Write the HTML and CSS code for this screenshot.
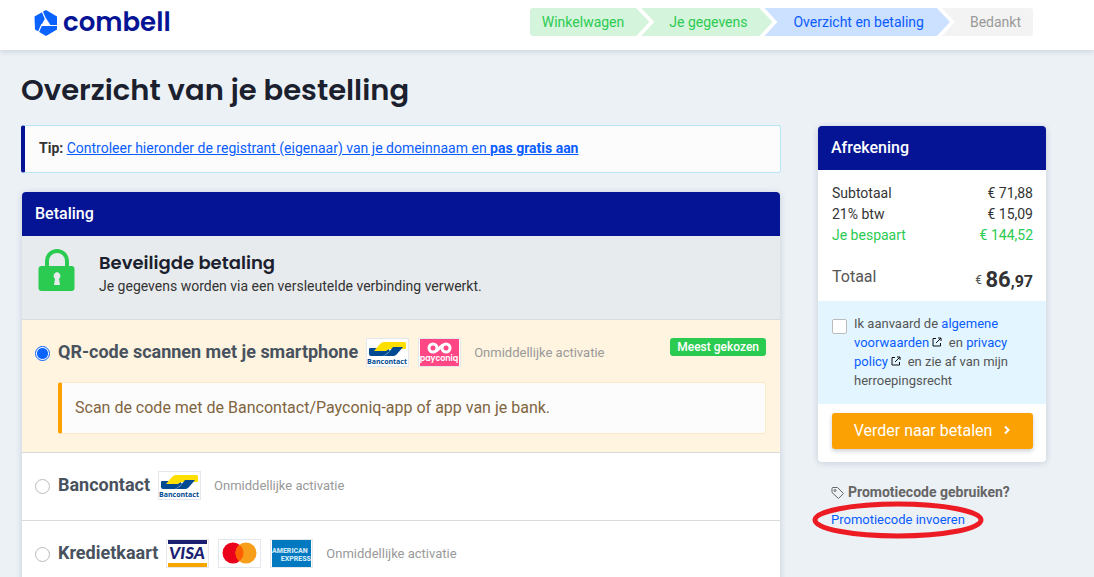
FILE: index.html
```html
<!DOCTYPE html>
<html lang="nl">

<head>
    <meta charset="UTF-8">
    <meta name="viewport" content="width=device-width, initial-scale=1.0">
    <title>Combell - Overzicht en betaling</title>
    <link rel="stylesheet" href="styles.css">
</head>

<body>

    <header>
        <a href="#" class="logo">
            <svg width="24" height="26" viewBox="0 0 24 26" aria-hidden="true">
                <path d="M12 0L23 6.500V19.500L12 26L1 19.500L0.500 6.500z" fill="#0a63ff" />
                <path d="M11.500 7.500L7 16h10z" fill="#fff" />
                <path d="M8 1l3.500 8M16 15.500h8M8 14L4 23" stroke="#fff" stroke-width="1.200" />
            </svg>
            <span>combell</span>
        </a>
        <ol class="steps">
            <li class="step done first">Winkelwagen</li>
            <li class="step done">Je gegevens</li>
            <li class="step current">Overzicht en betaling</li>
            <li class="step last">Bedankt</li>
        </ol>
    </header>

    <main>
        <h1>Overzicht van je bestelling</h1>

        <div class="columns">
            <div class="content">
                <div class="tip">
                    <b>Tip:</b> <a href="#">Controleer hieronder de registrant (eigenaar) van je domeinnaam en <b>pas gratis aan</b></a>
                </div>

                <form class="card payment">
                    <h2 class="card-title">Betaling</h2>

                    <div class="secure">
                        <svg width="38" height="44" viewBox="0 0 38 44" aria-hidden="true">
                            <path d="M9 20V13a10 10 0 0 1 20 0v7" fill="none" stroke="#2bcb51" stroke-width="4" />
                            <rect x="0.500" y="18" width="36" height="25" rx="3" fill="#2bcb51" />
                            <path d="M19 24a4 4 0 0 1 2 7l1 6h-6l1-6a4 4 0 0 1 2-7z" fill="#e8ebee" />
                        </svg>
                        <div>
                            <h3>Beveiligde betaling</h3>
                            <p>Je gegevens worden via een versleutelde verbinding verwerkt.</p>
                        </div>
                    </div>

                    <div class="method selected">
                        <div class="method-line">
                            <input type="radio" name="method" id="qr" checked>
                            <label for="qr">QR-code scannen met je smartphone</label>
                            <svg class="brand" viewBox="0 0 41 27">
                                <path d="M2 10q0-1 1-1h10l7-1 3 4-5 4q-1 1-3 1H4q-2 0-2-2z" fill="#004a91" />
                                <path d="M7 12l6-7c1-1 2-2 4-2h20c2 0 2 1 2 2v4c0 1-1 1-2 1H22l-3 2z" fill="#ffdf00" />
                                <path d="M14 17c4 0 6-2 8-4l4-5h10l-6 7c-2 2-3 2-5 2z" fill="#004a91" />
                                <text x="20" y="25" text-anchor="middle" class="bancontact-name">Bancontact</text>
                            </svg>
                            <svg class="brand" viewBox="0 0 41 27">
                                <rect x="1" width="39" height="27" fill="#ff4785" />
                                <g fill="none" stroke="#fff" stroke-width="3">
                                    <circle cx="14" cy="9" r="4" />
                                    <circle cx="27" cy="9" r="4" />
                                    <path d="M17 12l7-6" />
                                </g>
                                <text x="20" y="22" text-anchor="middle" class="payconiq-name">payconiq</text>
                            </svg>
                            <span class="activation">Onmiddellijke activatie</span>
                            <span class="badge">Meest gekozen</span>
                        </div>
                        <p class="note">Scan de code met de Bancontact/Payconiq-app of app van je bank.</p>
                    </div>

                    <div class="method">
                        <div class="method-line">
                            <input type="radio" name="method" id="bc">
                            <label for="bc">Bancontact</label>
                            <svg class="brand" viewBox="0 0 41 27">
                                <path d="M2 10q0-1 1-1h10l7-1 3 4-5 4q-1 1-3 1H4q-2 0-2-2z" fill="#004a91" />
                                <path d="M7 12l6-7c1-1 2-2 4-2h20c2 0 2 1 2 2v4c0 1-1 1-2 1H22l-3 2z" fill="#ffdf00" />
                                <path d="M14 17c4 0 6-2 8-4l4-5h10l-6 7c-2 2-3 2-5 2z" fill="#004a91" />
                                <text x="20" y="25" text-anchor="middle" class="bancontact-name">Bancontact</text>
                            </svg>
                            <span class="activation">Onmiddellijke activatie</span>
                        </div>
                    </div>

                    <div class="method">
                        <div class="method-line">
                            <input type="radio" name="method" id="card">
                            <label for="card">Kredietkaart</label>
                            <svg class="brand" viewBox="0 0 41 27">
                                <rect x="1" width="39" height="4" fill="#1a1f71" />
                                <rect x="1" y="23" width="39" height="4" fill="#f7a600" />
                                <text x="20" y="19" text-anchor="middle" class="visa-name">VISA</text>
                            </svg>
                            <svg class="brand" viewBox="0 0 41 27">
                                <circle cx="14" cy="13" r="10.500" fill="#eb001b" />
                                <circle cx="27" cy="13" r="10.500" fill="#f79e1b" />
                                <path d="M20.500 4.800a10.500 10.500 0 0 1 0 16.400a10.500 10.500 0 0 1 0-16.400z" fill="#ff5f00" />
                            </svg>
                            <svg class="brand" viewBox="0 0 41 27">
                                <rect x="1" width="39" height="27" fill="#0079c1" />
                                <text x="1" y="13" class="amex-name">AMERICAN</text>
                                <text x="40" y="21" text-anchor="end" class="amex-name">EXPRESS</text>
                            </svg>
                            <span class="activation">Onmiddellijke activatie</span>
                        </div>
                    </div>
                </form>
            </div>

            <aside>
                <div class="card checkout">
                    <h2 class="card-title">Afrekening</h2>
                    <dl class="totals">
                        <div><dt>Subtotaal</dt><dd>€ 71,88</dd></div>
                        <div><dt>21% btw</dt><dd>€ 15,09</dd></div>
                        <div class="saved"><dt>Je bespaart</dt><dd>€ 144,52</dd></div>
                        <div class="total"><dt>Totaal</dt><dd><small>€</small> <b>86</b><b class="cents">,97</b></dd></div>
                    </dl>
                    <div class="terms">
                        <input type="checkbox" id="terms">
                        <label for="terms">Ik aanvaard de <a href="#">algemene voorwaarden</a>
                            <svg class="ext" viewBox="0 0 10 10"><path d="M4 1.500H1v7.500h7.500V6M6 1h3v3M9 1L4 6" /></svg>&nbsp;
                            en <a href="#">privacy policy</a>
                            <svg class="ext" viewBox="0 0 10 10"><path d="M4 1.500H1v7.500h7.500V6M6 1h3v3M9 1L4 6" /></svg>&nbsp;
                            en zie af van mijn herroepingsrecht</label>
                    </div>
                    <button type="button" class="pay">
                        Verder naar betalen
                        <svg width="8" height="10" viewBox="0 0 8 10" aria-hidden="true"><path d="M2 1.500L5.500 5L2 8.500" fill="none" stroke="#fff" stroke-width="2" /></svg>
                    </button>
                </div>

                <div class="promo">
                    <h4>
                        <svg width="14" height="14" viewBox="0 0 14 14" fill="none" stroke="#666" aria-hidden="true">
                            <path d="M1 2.500Q1 1.500 2 1.500L6.500 1.500L12.500 7.500L7.500 12.500L1 6.500z" />
                            <circle cx="4" cy="4.500" r="1" />
                        </svg>
                        Promotiecode gebruiken?
                    </h4>
                    <a href="#" class="promo-link">
                        Promotiecode invoeren
                        <svg class="mark" viewBox="0 0 172 38" aria-hidden="true"><ellipse cx="86" cy="19" rx="83" ry="16" /></svg>
                    </a>
                </div>
            </aside>
        </div>
    </main>

</body>

</html>
```
FILE: styles.css
```css
* {
    box-sizing: border-box;
}

body {
    margin: 0;
    background-color: #ecf1f6;
    color: #333;
    font-family: Roboto, "Liberation Sans", sans-serif;
    font-size: 14px;
    line-height: 21px;
}

h1, h2, h3, h4, p, ol, dl, dd {
    margin: 0;
    padding: 0;
}

a {
    color: #0a5cff;
    text-decoration: none;
}

header {
    display: flex;
    justify-content: space-between;
    align-items: flex-start;
    height: 50px;
    padding: 8px 61px 0 34px;
    background-color: white;
    box-shadow: 0 1px 6px rgba(40, 60, 90, 0.2);
}

.logo {
    display: flex;
    align-items: center;
    gap: 5px;
    height: 30px;
    color: #041494;
    font-family: Poppins, Inter, sans-serif;
    font-size: 26px;
    font-weight: 600;
    line-height: 26px;
}

.logo span {
    padding-bottom: 2px;
}

.steps {
    display: flex;
    list-style: none;
}

.step {
    height: 28px;
    padding: 0 25px 0 28px;
    line-height: 28px;
    font-size: 14px;
    white-space: nowrap;
    background-color: #f3f3f3;
    color: #999;
    clip-path: polygon(0 0, calc(100% - 13px) 0, 100% 50%, calc(100% - 13px) 100%, 0 100%, 13px 50%);
}

.step + .step {
    margin-left: -8px;
}

.step.first {
    padding-left: 12px;
    border-radius: 3px 0 0 3px;
    clip-path: polygon(0 0, calc(100% - 13px) 0, 100% 50%, calc(100% - 13px) 100%, 0 100%);
}

.step.last {
    padding-right: 12px;
    border-radius: 0 3px 3px 0;
    clip-path: polygon(0 0, 100% 0, 100% 100%, 0 100%, 13px 50%);
}

.step.done {
    background-color: #d4f4dc;
    color: #2bcb51;
}

.step.current {
    padding: 0 26px 0 29px;
    background-color: #cce0ff;
    color: #0a5cff;
}

main {
    padding: 20px 48px 0 21px;
}

h1 {
    margin-bottom: 15px;
    color: #1b1f2e;
    font-family: Poppins, Inter, sans-serif;
    font-size: 29px;
    font-weight: 600;
    line-height: 40px;
}

.columns {
    display: flex;
    gap: 37px;
}

.content {
    flex: 1;
}

.tip {
    padding: 11px 14px 13px;
    margin-bottom: 19px;
    background-color: #fcfcfc;
    border: 1px solid #b8e6f2;
    border-left: 4px solid #041494;
    border-radius: 3px;
    line-height: 22px;
}

.tip a {
    text-decoration: underline;
}

.card {
    background-color: white;
    border-radius: 4px;
    box-shadow: 0 1px 6px rgba(40, 60, 90, 0.2);
}

.card-title {
    padding: 11px 13px;
    background-color: #041494;
    border-radius: 4px 4px 0 0;
    color: white;
    font-size: 16px;
    font-weight: 500;
    line-height: 22px;
}

.payment {
    margin: 0 1px;
}

.secure {
    display: flex;
    gap: 23px;
    padding: 12px 16px 0;
    height: 83px;
    background-color: #e8ebee;
}

.secure h3 {
    padding-top: 2px;
    color: #1b1f2e;
    font-family: Poppins, Inter, sans-serif;
    font-size: 18px;
    font-weight: 600;
    line-height: 26px;
}

.method {
    padding: 18px 14px 20px 13px;
    border-top: 1px solid #d9dcdf;
}

.method.selected {
    padding-bottom: 18px;
    background-color: #fff4e0;
}

.method-line {
    display: flex;
    align-items: center;
}

.method input {
    appearance: none;
    width: 15px;
    height: 15px;
    margin: 2px 8px 0 0;
    background-color: white;
    border: 1px solid #bbb;
    border-radius: 50%;
}

.method input:checked {
    border-color: #0a5cff;
    background: radial-gradient(#0a63ff 5px, white 6px);
}

.method label {
    padding-bottom: 1px;
    color: #48525e;
    font-size: 18px;
    font-weight: 700;
    line-height: 26px;
}

.brand {
    width: 43px;
    height: 29px;
    margin-left: 8px;
    background-color: white;
    border: 1px solid #e4e8ec;
}

.brand + .brand {
    margin-left: 9px;
}

.bancontact-name {
    fill: #004a91;
    font: 700 7px "Open Sans", sans-serif;
}

.payconiq-name {
    fill: white;
    font: 600 8px Poppins, sans-serif;
}

.visa-name {
    fill: #1a1f71;
    font: italic 900 17px Lato, sans-serif;
}

.amex-name {
    fill: #cbe6f5;
    font: 900 7px Roboto, sans-serif;
}

.activation {
    margin-left: 13px;
    color: #999;
    font-size: 13px;
}

.badge {
    align-self: flex-start;
    margin-left: auto;
    padding: 0 7px;
    background-color: #2bcb51;
    border-radius: 3px;
    color: white;
    font-size: 12px;
    font-weight: 500;
    line-height: 18px;
}

.note {
    margin: 15px 0 0 23px;
    padding: 14px 13px;
    background-color: #fcfcfc;
    border: 1px solid #fdeacb;
    border-left: 4px solid #fca103;
    border-radius: 3px;
    color: #806540;
    font-size: 16px;
    line-height: 22px;
}

aside {
    width: 228px;
    padding-top: 1px;
}

.totals {
    padding: 13px 13px 8px 14px;
}

.totals div {
    display: flex;
    justify-content: space-between;
}

.totals .saved {
    color: #2bcb51;
}

.totals .total {
    align-items: center;
    margin-top: 15px;
    line-height: 30px;
}

.total dt {
    color: #555;
    font-size: 16px;
}

.total dd {
    padding-top: 8px;
    line-height: 22px;
}

.total small {
    font-size: 12px;
    color: #555;
    vertical-align: 3px;
}

.total b {
    font-size: 22px;
}

.total .cents {
    font-size: 16px;
}

.terms {
    display: flex;
    gap: 7px;
    padding: 13px 14px 14px;
    background-color: #e3f6ff;
    color: #555;
    font-size: 13px;
    line-height: 19px;
}

.terms input {
    appearance: none;
    flex: none;
    width: 15px;
    height: 15px;
    margin: 5px 0 0;
    background-color: white;
    border: 1px solid #bbb;
    border-radius: 2px;
}

.ext {
    width: 10px;
    height: 10px;
    fill: none;
    stroke: #111;
}

.pay {
    display: flex;
    justify-content: center;
    align-items: center;
    gap: 11px;
    width: calc(100% - 27px);
    height: 36px;
    margin: 9px 13px 0 14px;
    padding-bottom: 3px;
    background-color: #fca103;
    border: none;
    border-radius: 3px;
    box-shadow: 0 2px 4px rgba(40, 60, 90, 0.25);
    color: white;
    font-family: inherit;
    font-size: 16px;
}

.checkout {
    padding-bottom: 13px;
}

.promo {
    padding: 20px 13px 0;
}

.promo h4 {
    display: flex;
    align-items: center;
    gap: 3px;
    color: #666;
    font-size: 14px;
    white-space: nowrap;
}

.promo-link {
    position: relative;
    display: inline-block;
    margin-top: 6px;
    font-size: 13px;
}

.mark {
    position: absolute;
    top: -8px;
    left: -19px;
    width: 172px;
    height: 38px;
    fill: none;
    stroke: #ed1c24;
    stroke-width: 5px;
}
```
